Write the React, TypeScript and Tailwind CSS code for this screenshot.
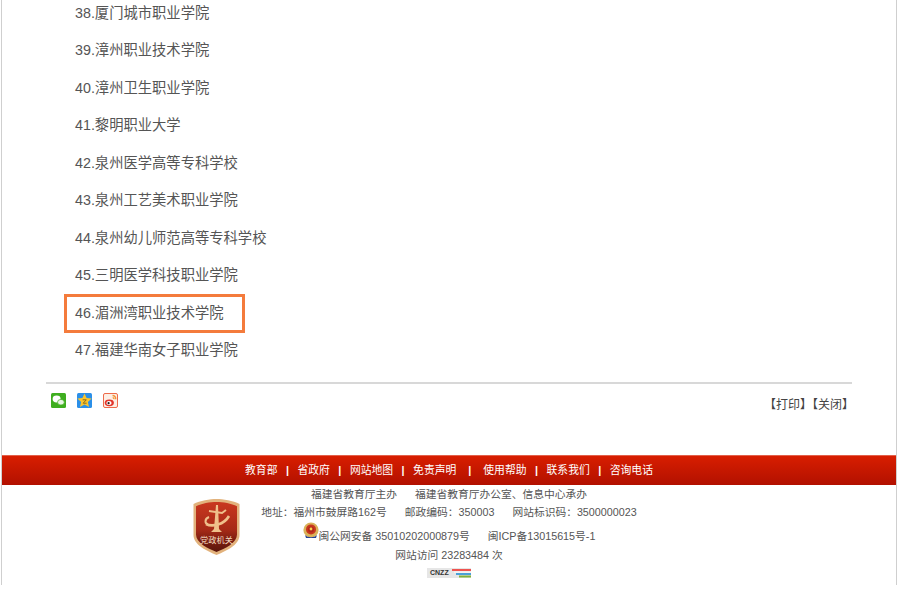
const schools = [
  '38.厦门城市职业学院',
  '39.漳州职业技术学院',
  '40.漳州卫生职业学院',
  '41.黎明职业大学',
  '42.泉州医学高等专科学校',
  '43.泉州工艺美术职业学院',
  '44.泉州幼儿师范高等专科学校',
  '45.三明医学科技职业学院',
  '46.湄洲湾职业技术学院',
  '47.福建华南女子职业学院',
]

const links = ['教育部', '省政府', '网站地图', '免责声明', '使用帮助', '联系我们', '咨询电话']

function WechatIcon() {
  return (
    <svg width="15" height="15" viewBox="0 0 15 15">
      <rect width="15" height="15" rx="1.5" fill="#3fae1f" />
      <ellipse cx="5.6" cy="6" rx="4" ry="3.4" fill="#fff" />
      <ellipse cx="9.9" cy="9.2" rx="3.4" ry="2.8" fill="#e8f5e3" stroke="#3fae1f" strokeWidth="0.7" />
    </svg>
  )
}

function QzoneIcon() {
  return (
    <svg width="15" height="15" viewBox="0 0 15 15">
      <rect width="15" height="15" rx="1.5" fill="#2b8fe8" />
      <polygon points="7.5,0.6 9.6,5 14.6,5.6 10.9,8.9 12,14 7.5,11.5 3,14 4.1,8.9 0.4,5.6 5.4,5" fill="#fbc52d" />
      <path d="M5.7 6.8h3.6l-3.1 3.4h3.4" fill="none" stroke="#8a6a1a" strokeWidth="1" />
    </svg>
  )
}

function WeiboIcon() {
  return (
    <svg width="15" height="15" viewBox="0 0 15 15">
      <rect x="0.5" y="0.5" width="14" height="14" rx="1.5" fill="#fdeee4" stroke="#ee6a4a" />
      <path d="M9.5 2.5c2 0 3.4 1.6 3.2 3.8M9.7 4.6c.9 0 1.3.7 1.2 1.5" fill="none" stroke="#f3953a" strokeWidth="1.4" />
      <ellipse cx="6.3" cy="9.8" rx="4.6" ry="3.4" fill="#e2352b" />
      <ellipse cx="6" cy="10" rx="2.6" ry="2" fill="#fff" />
      <circle cx="5.6" cy="10.2" r="1.1" fill="#222" />
    </svg>
  )
}

function PartyBadge() {
  return (
    <svg width="47" height="56" viewBox="0 0 47 56" className="shrink-0">
      <defs>
        <linearGradient id="shieldFill" x1="0" y1="0" x2="0" y2="1">
          <stop offset="0" stopColor="#c9381f" />
          <stop offset="0.55" stopColor="#a72a17" />
          <stop offset="0.75" stopColor="#7d1e10" />
          <stop offset="1" stopColor="#5a150b" />
        </linearGradient>
      </defs>
      <path d="M23.5 0C30 0 40 1.5 46.5 5V36C46.5 46 33 52 23.5 56C14 52 .5 46 .5 36V5C7 1.5 17 0 23.5 0Z" fill="#e2b27c" />
      <path d="M23.5 3C30 3 38.5 4.5 44 7.2V35.5C44 44 32 49.5 23.5 53C15 49.5 3 44 3 35.5V7.2C8.5 4.5 17 3 23.5 3Z" fill="url(#shieldFill)" />
      {/* column */}
      <path d="M23 6L25 6L26 30L29 33H18L21 30Z" fill="#efc08b" />
      <path d="M16 12L29 14L33 11" stroke="#efc08b" strokeWidth="2" fill="none" />
      {/* ribbon */}
      <path d="M13 25c6 3 18 1 23-8" stroke="#efc08b" strokeWidth="2.6" fill="none" />
      <path d="M16 18c-5 2-4 7-1 7" stroke="#efc08b" strokeWidth="2" fill="none" />
      <text x="23.5" y="43.5" textAnchor="middle" fontSize="8.2" fill="#f6dcc0" fontFamily='"Noto Sans CJK SC", sans-serif'>党政机关</text>
    </svg>
  )
}

function PoliceBadge() {
  return (
    <svg width="16" height="18" viewBox="0 0 16 18" className="shrink-0">
      <circle cx="8" cy="8" r="7.6" fill="#d9b25a" />
      <circle cx="8" cy="7.4" r="5" fill="#c9361d" />
      <circle cx="8" cy="7.4" r="3" fill="#b3261a" />
      <circle cx="8" cy="7" r="1.4" fill="#f5d34e" />
      <path d="M2 13c3 3 9 3 12 0l-1 3H3z" fill="#24408f" />
    </svg>
  )
}

function CnzzBadge() {
  return (
    <div className="flex h-[10px] w-[44px] items-center bg-[#e6e6e6]">
      <span className="ml-[3px] w-[22px] text-[7px] font-bold leading-[10px] text-[#333]">CNZZ</span>
      <svg width="19" height="10" viewBox="0 0 19 10" className="ml-auto">
        <rect x="0" y="1" width="19" height="2" fill="#ef5350" />
        <rect x="2" y="3.5" width="17" height="1.5" fill="#f3f3f3" />
        <rect x="4" y="5" width="15" height="2" fill="#4aa0d8" />
        <rect x="7" y="7.5" width="12" height="2" fill="#7fb13c" />
      </svg>
    </div>
  )
}

export default function App() {
  return (
    <div className="h-[589px] w-[900px] overflow-hidden bg-white font-['Liberation_Sans','Noto_Sans_CJK_SC',sans-serif] text-[#555]">
      <div className="ml-px flex h-[585px] w-[896px] flex-col overflow-hidden border-x border-[#cfcfcf] bg-white">
        {/* list */}
        <ul className="-mt-[5.5px] pl-[73px] text-[14.3px]">
          {schools.map((s) => (
            <li key={s} className="relative h-[37.5px] leading-[37.5px]">
              {s}
              {s.startsWith('46') && (
                <span className="absolute -top-[1px] -left-[11px] h-[39px] w-[181px] border-[3px] border-[#f47b3c]" />
              )}
            </li>
          ))}
        </ul>

        {/* divider + share */}
        <div className="mx-[44px] mt-[12.5px] border-t-2 border-[#d8d8d8]" />
        <div className="mx-[49px] mt-[9px] flex h-[62px] items-start justify-between">
          <div className="flex gap-[11px]">
            <WechatIcon />
            <QzoneIcon />
            <WeiboIcon />
          </div>
          <div className="mt-[4px] mr-[-7px] text-[12px] leading-[16px] text-[#444]">【打印】【关闭】</div>
        </div>

        {/* red bar */}
        <div className="flex h-[30px] shrink-0 items-center justify-center border-t border-[#e2604a] bg-gradient-to-b from-[#d81e00] to-[#b21000] text-[10.8px] text-white">
          {links.map((l, i) => (
            <span key={l} className="flex items-center">
              {i > 0 && <span className={i === 4 ? 'px-[12px] font-bold' : 'px-[8.5px] font-bold'}>|</span>}
              {l}
            </span>
          ))}
        </div>

        {/* footer */}
        <div className="flex pl-[191px] text-[10.75px] text-[#555]">
          <div className="mt-[14px]">
            <PartyBadge />
          </div>
          <div className="flex w-[418px] flex-col items-center">
            <div className="mt-px flex h-[17px] items-center gap-[18px]">
              <span>福建省教育厅主办</span>
              <span>福建省教育厅办公室、信息中心承办</span>
            </div>
            <div className="flex h-[19px] items-center gap-[18px]">
              <span>地址：福州市鼓屏路162号</span>
              <span>邮政编码：350003</span>
              <span>网站标识码：3500000023</span>
            </div>
            <div className="flex h-[22px] items-end gap-[18px]">
              <span className="flex items-start">
                <span className="-mt-[6px]"><PoliceBadge /></span>
                <span className="self-end">闽公网安备 35010202000879号</span>
              </span>
              <span>闽ICP备13015615号-1</span>
            </div>
            <div className="mt-[2px] flex h-[18px] items-center">网站访问 23283484 次</div>
            <div className="mt-[4px]">
              <CnzzBadge />
            </div>
          </div>
        </div>
      </div>
    </div>
  )
}
